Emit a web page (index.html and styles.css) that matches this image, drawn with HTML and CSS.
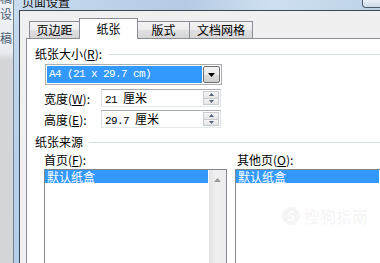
FILE: index.html
```html
<!DOCTYPE html>
<html lang="zh-CN">
<head>
    <meta charset="UTF-8">
    <title>页面设置</title>
    <link rel="stylesheet" href="styles.css">
</head>
<body>
    <div class="screen">
        <div class="behind">
            <span class="behind-top">稿</span>
            <span class="behind-mid">设</span>
            <span class="behind-low">稿</span>
        </div>

        <div class="dialog">
            <div class="titlebar">
                <span class="title">页面设置</span>
                <span class="caption-btn"></span>
            </div>

            <div class="client">
                <div class="tabs">
                    <div class="tab">页边距</div>
                    <div class="tab active">纸张</div>
                    <div class="tab">版式</div>
                    <div class="tab">文档网格</div>
                </div>

                <div class="panel">
                    <div class="group-title"><span>纸张大小(<u>R</u>):</span><i></i></div>

                    <div class="size-select">
                        <span class="select-value">A4 (21 x 29.7 cm)</span>
                        <span class="select-btn">
                            <svg width="7" height="4" viewBox="0 0 7 4"><path d="M0 0h7L3.5 4z" fill="#000"/></svg>
                        </span>
                    </div>

                    <div class="dim">
                        <label>宽度(<u>W</u>):</label>
                        <div class="spin">
                            <span class="spin-value"><b>21 </b>厘米</span>
                            <span class="spin-btns">
                                <span><svg width="5" height="3" viewBox="0 0 5 3"><path d="M0 3h5L2.5 0z"/></svg></span>
                                <span><svg width="5" height="3" viewBox="0 0 5 3"><path d="M0 0h5L2.5 3z"/></svg></span>
                            </span>
                        </div>
                    </div>

                    <div class="dim second">
                        <label>高度(<u>E</u>):</label>
                        <div class="spin">
                            <span class="spin-value"><b>29.7 </b>厘米</span>
                            <span class="spin-btns">
                                <span><svg width="5" height="3" viewBox="0 0 5 3"><path d="M0 3h5L2.5 0z"/></svg></span>
                                <span><svg width="5" height="3" viewBox="0 0 5 3"><path d="M0 0h5L2.5 3z"/></svg></span>
                            </span>
                        </div>
                    </div>

                    <div class="group-title source-title"><span>纸张来源</span><i></i></div>

                    <div class="sources">
                        <div class="source first">
                            <label>首页(<u>F</u>):</label>
                            <div class="listbox">
                                <div class="items">
                                    <div class="item">默认纸盒</div>
                                </div>
                                <div class="scrollbar">
                                    <svg width="7" height="4" viewBox="0 0 7 4"><path d="M0 4h7L3.5 0z"/></svg>
                                </div>
                            </div>
                        </div>
                        <div class="source other">
                            <label>其他页(<u>O</u>):</label>
                            <div class="listbox">
                                <div class="items">
                                    <div class="item">默认纸盒</div>
                                </div>
                            </div>
                        </div>
                    </div>
                </div>
            </div>
        </div>

        <div class="watermark">
            <span class="wm-logo">S</span>
            <span>搜狗指南</span>
        </div>
    </div>
</body>
</html>
```

FILE: styles.css
```css
* {
    margin: 0;
    padding: 0;
    box-sizing: border-box;
}

body {
    width: 380px;
    height: 263px;
    overflow: hidden;
    font-family: "Noto Sans CJK SC", sans-serif;
    font-size: 12px;
    color: #000;
    background: #fff;
}

u {
    text-decoration: underline;
}

.screen {
    position: relative;
    display: flex;
    width: 380px;
    height: 263px;
    overflow: hidden;
}

/* window lying behind the dialog */
.behind {
    width: 13px;
    flex: none;
    display: flex;
    flex-direction: column;
    overflow: hidden;
    background: linear-gradient(to bottom, #eef1f5 0, #e9edf1 52px, #d3d5d8 60px, #d3d5d8 100%);
    color: #4b5b72;
    line-height: 12px;
}

.behind-top {
    margin-top: -8px;
}

.behind-mid {
    margin-top: 4px;
}

.behind-low {
    margin-top: 12px;
}

/* dialog frame */
.dialog {
    flex: 1;
    display: flex;
    flex-direction: column;
    border-left: 1px solid #76838f;
    padding-left: 5px;
    background: linear-gradient(to bottom, #c9dcf0 0, #b9d2ec 40%, #b3cfec 100%);
}

.titlebar {
    height: 16px;
    display: flex;
    justify-content: space-between;
    background: linear-gradient(to right, rgba(255,255,255,0) 0, rgba(120,150,190,0.25) 45%, rgba(255,255,255,0.1) 70%, rgba(140,170,200,0.2) 100%);
}

.title {
    margin-left: 3px;
    margin-top: -6px;
    line-height: 16px;
    color: #111;
}

.caption-btn {
    width: 22px;
    height: 8px;
    margin-right: -4px;
    border: 1px solid #4f5b69;
    border-top: none;
    border-radius: 0 0 4px 4px;
    background: linear-gradient(#e8eef5, #cfdbe8);
}

.client {
    flex: 1;
    display: flex;
    flex-direction: column;
    border-left: 1px solid #3e4650;
    border-top: 1px solid #3e4650;
    background: #f0f0f0;
    padding: 7px 0 0 6px;
}

/* tabs */
.tabs {
    display: flex;
    align-items: flex-end;
    height: 20px;
    padding-left: 4px;
}

.tab {
    height: 17px;
    margin-left: -1px;
    border: 1px solid #898c95;
    border-bottom: none;
    background: linear-gradient(#f3f3f3, #ececec 50%, #e0e0e0 51%, #d6d6d6);
    text-align: center;
    line-height: 15px;
}

.tab:nth-child(1) { width: 51px; }
.tab:nth-child(2) { width: 59px; }
.tab:nth-child(3) { width: 53px; }
.tab:nth-child(4) { width: 64px; }

.tab.active {
    position: relative;
    z-index: 1;
    height: 21px;
    margin-bottom: -1px;
    background: #fff;
    line-height: 20px;
}

.panel {
    flex: 1;
    background: #fff;
    border-top: 1px solid #898c95;
    border-left: 1px solid #898c95;
    padding: 9px 0 0 8px;
}

.group-title {
    display: flex;
    align-items: center;
    height: 12px;
    line-height: 12px;
}

.group-title i {
    flex: 1;
    height: 1px;
    margin-left: 7px;
    background: #d5dfe5;
}

.source-title {
    margin-top: 8px;
}

.source-title i {
    margin-left: 6px;
}

/* paper size combobox */
.size-select {
    display: flex;
    width: 177px;
    height: 21px;
    margin: 4px 0 0 10px;
    padding: 1px;
    border: 1px solid #abadb3;
}

.select-value {
    flex: 1;
    margin-right: 1px;
    padding-left: 2px;
    background: #3399ff;
    color: #fff;
    font-family: "Liberation Mono", monospace;
    font-size: 11px;
    letter-spacing: -0.6px;
    line-height: 17px;
    white-space: nowrap;
}

.select-btn {
    width: 17px;
    display: flex;
    align-items: center;
    justify-content: center;
    border: 1px solid #707070;
    border-radius: 2px;
    background: linear-gradient(#f2f2f2, #ebebeb 50%, #dddddd 51%, #cfcfcf);
}

/* width / height fields */
.dim {
    display: flex;
    align-items: center;
    height: 18px;
    margin: 4px 0 0 9px;
}

.dim.second {
    margin-top: 3px;
}

.dim label {
    width: 57px;
}

.spin {
    display: flex;
    width: 120px;
    height: 18px;
    padding: 1px;
    border: 1px solid #abadb3;
    border-left-color: #dbdfe6;
    border-right-color: #dbdfe6;
    border-bottom-color: #e3e9ef;
}

.spin-value {
    flex: 1;
    padding-left: 2px;
    line-height: 14px;
    white-space: pre;
}

.spin-value b {
    font-weight: normal;
    font-family: "Liberation Mono", monospace;
    font-size: 11px;
    letter-spacing: -0.6px;
}

.spin-btns {
    width: 16px;
    display: flex;
    flex-direction: column;
}

.spin-btns span {
    flex: 1;
    display: flex;
    align-items: center;
    justify-content: center;
    border: 1px solid #c8cbd0;
    background: linear-gradient(#f6f6f6, #e4e4e4);
    fill: #55637a;
}

.spin-btns span + span {
    border-top: none;
}

/* paper source lists */
.sources {
    display: flex;
    margin-top: 6px;
}

.source label {
    display: block;
    height: 12px;
    line-height: 12px;
}

.source.first {
    width: 183px;
    margin-left: 9px;
}

.source.other {
    flex: 1;
    margin-left: 8px;
}

.source.other label {
    padding-left: 2px;
}

.listbox {
    display: flex;
    height: 100px;
    margin-top: 3px;
    border: 1px solid #828790;
    border-right: none;
}

.source.first .listbox {
    border-right: 1px solid #828790;
}

.items {
    flex: 1;
    margin-right: 1px;
}

.item {
    height: 13px;
    padding-left: 2px;
    background: #3399ff;
    color: #fff;
    line-height: 13px;
}

.scrollbar {
    width: 17px;
    display: flex;
    justify-content: center;
    padding-top: 8px;
    background: linear-gradient(to right, #e2e2e2, #f0f0f0 40%, #ececec);
    fill: #9a9a9a;
}

/* faint site watermark over the lists */
.watermark {
    position: absolute;
    left: 282px;
    top: 204px;
    display: flex;
    align-items: center;
    gap: 4px;
    color: rgba(0, 0, 0, 0.05);
    font-size: 16px;
    font-weight: bold;
}

.wm-logo {
    width: 18px;
    height: 18px;
    border-radius: 50%;
    background: rgba(0, 0, 0, 0.04);
    color: rgba(255, 255, 255, 0.9);
    text-align: center;
    line-height: 18px;
    font-size: 13px;
}
```
